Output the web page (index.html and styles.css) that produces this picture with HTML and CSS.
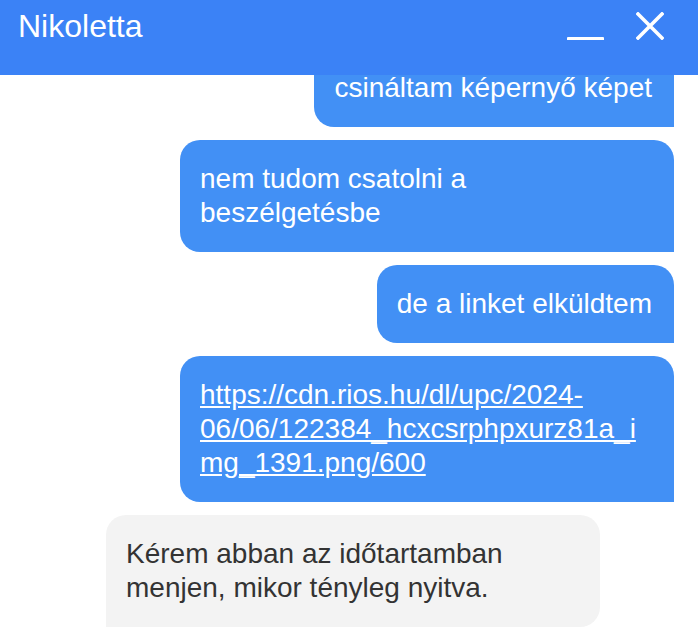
FILE: index.html
```html
<!DOCTYPE html>
<html lang="hu">
<head>
<meta charset="utf-8">
<title>Nikoletta</title>
<link rel="stylesheet" href="styles.css">
</head>
<body>
<div class="chat">
  <header class="chat-header">
    <div class="chat-title">Nikoletta</div>
    <div class="chat-actions">
      <button class="icon-btn" aria-label="Kis méret">
        <svg width="37" height="28" viewBox="0 0 37 28"><rect x="0" y="25" width="37" height="4.5" rx="1" fill="#fff"/></svg>
      </button>
      <button class="icon-btn" aria-label="Bezárás">
        <svg width="28" height="28" viewBox="0 0 28 28"><path d="M2 2 L26 26 M26 2 L2 26" stroke="#fff" stroke-width="3.6" stroke-linecap="square" fill="none"/></svg>
      </button>
    </div>
  </header>
  <main class="messages">
    <div class="msg msg-out">csináltam képernyő képet</div>
    <div class="msg msg-out">nem tudom csatolni a beszélgetésbe</div>
    <div class="msg msg-out">de a linket elküldtem</div>
    <div class="msg msg-out msg-wide"><a class="msg-link" href="#">https://cdn.rios.hu/dl/upc/2024-<wbr>06/06/122384_hcxcsrphpxurz81a_i<wbr>mg_1391.png/600</a></div>
    <div class="msg msg-in">Kérem abban az időtartamban menjen, mikor tényleg nyitva.</div>
  </main>
</div>
</body>
</html>
```
FILE: styles.css
```css
* { box-sizing: border-box; }

html, body {
  margin: 0;
  padding: 0;
  background: #ffffff;
}

body {
  font-family: "Liberation Sans", Arial, Helvetica, sans-serif;
}

.chat {
  height: 632px;
  display: flex;
  flex-direction: column;
  overflow: hidden;
}

.chat-header {
  flex: none;
  height: 75px;
  background: #3b82f6;
  color: #ffffff;
  display: flex;
  align-items: flex-start;
  padding: 8px 34px 0 18px;
}

.chat-title {
  font-size: 32px;
  line-height: 37px;
}

.chat-actions {
  margin-left: auto;
  margin-top: 4px;
  display: flex;
  align-items: flex-start;
  gap: 32px;
}

.icon-btn {
  border: 0;
  background: none;
  padding: 0;
  margin: 0;
  display: block;
  line-height: 0;
  cursor: pointer;
}

.messages {
  flex: 1;
  min-height: 0;
  overflow: hidden;
  display: flex;
  flex-direction: column;
  justify-content: flex-end;
  gap: 13px;
  padding: 0 24px 5px 106px;
}

.msg {
  max-width: 494px;
  padding: 22px 22px 22px 20px;
  font-size: 28px;
  line-height: 34px;
  overflow-wrap: break-word;
}

.msg-out {
  align-self: flex-end;
  background: #4290f5;
  color: #ffffff;
  border-radius: 20px 20px 0 20px;
}

.msg-in {
  align-self: flex-start;
  background: #f3f3f3;
  color: #333333;
  border-radius: 20px 20px 20px 0;
}

.msg-link {
  color: #ffffff;
  text-decoration: underline;
}
```
